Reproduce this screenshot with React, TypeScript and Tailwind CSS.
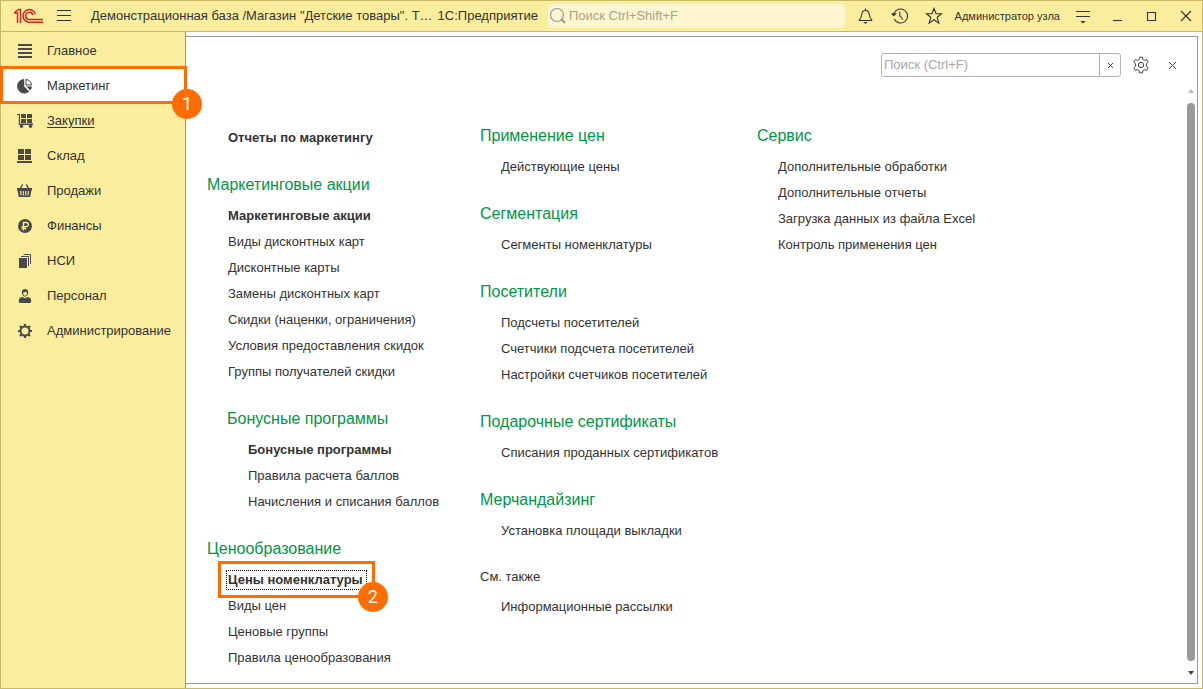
import React from "react";

type Item = { label: string; bold?: boolean; marked?: boolean };
type Group = { title?: string; nested?: boolean; plain?: boolean; items: Item[] };

const columns: Group[][] = [
  [
    { items: [{ label: "Отчеты по маркетингу", bold: true }] },
    {
      title: "Маркетинговые акции",
      items: [
        { label: "Маркетинговые акции", bold: true },
        { label: "Виды дисконтных карт" },
        { label: "Дисконтные карты" },
        { label: "Замены дисконтных карт" },
        { label: "Скидки (наценки, ограничения)" },
        { label: "Условия предоставления скидок" },
        { label: "Группы получателей скидки" },
      ],
    },
    {
      title: "Бонусные программы",
      nested: true,
      items: [
        { label: "Бонусные программы", bold: true },
        { label: "Правила расчета баллов" },
        { label: "Начисления и списания баллов" },
      ],
    },
    {
      title: "Ценообразование",
      items: [
        { label: "Цены номенклатуры", bold: true, marked: true },
        { label: "Виды цен" },
        { label: "Ценовые группы" },
        { label: "Правила ценообразования" },
      ],
    },
  ],
  [
    { title: "Применение цен", items: [{ label: "Действующие цены" }] },
    { title: "Сегментация", items: [{ label: "Сегменты номенклатуры" }] },
    {
      title: "Посетители",
      items: [
        { label: "Подсчеты посетителей" },
        { label: "Счетчики подсчета посетителей" },
        { label: "Настройки счетчиков посетителей" },
      ],
    },
    { title: "Подарочные сертификаты", items: [{ label: "Списания проданных сертификатов" }] },
    { title: "Мерчандайзинг", items: [{ label: "Установка площади выкладки" }] },
    { title: "См. также", plain: true, items: [{ label: "Информационные рассылки" }] },
  ],
  [
    {
      title: "Сервис",
      items: [
        { label: "Дополнительные обработки" },
        { label: "Дополнительные отчеты" },
        { label: "Загрузка данных из файла Excel" },
        { label: "Контроль применения цен" },
      ],
    },
  ],
];

// section icons, all on a 16x16 grid
const sections = [
  { label: "Главное", icon: <path d="M1 1h14v2H1zM1 5h14v2H1zM1 9h14v2H1zM1 13h14v2H1z" /> },
  {
    label: "Маркетинг",
    icon: (
      <>
        <path d="M7.200 1v7.500l5 5A7.200 7.200 0 1 1 7.200 1z" />
        <path d="M9 1.500a5.700 5.700 0 0 1 5.500 5.500H9z" fill="none" stroke="#4a4a4a" />
        <path d="M9.500 8.500h5.500a7 7 0 0 1-1.800 3.900z" />
      </>
    ),
  },
  {
    label: "Закупки",
    icon: (
      <>
        <path d="M0 1h3v9.500h13V12H1.800V2H0z" />
        <path d="M4 1h5v4H4zM10 1h5v4h-5zM4 6h5v4H4zM10 6h5v4h-5z" />
        <circle cx="4.500" cy="13.300" r="1.700" />
        <circle cx="13.500" cy="13.300" r="1.700" />
      </>
    ),
  },
  { label: "Склад", icon: <path d="M1 1h6v5H1zM8 1h6v5H8zM1 7h6v5H1zM8 7h6v5H8zM0 13h15v2H0z" /> },
  {
    label: "Продажи",
    icon: (
      <>
        <path d="M3 6l2.500-4H6M12 6L9.500 2H9" fill="none" stroke="#4a4a4a" strokeWidth="1.400" />
        <path
          fillRule="evenodd"
          d="M0 5h15v2.500h-.6L13.200 14H1.800L.6 7.500H0zM3 8l.6 4.500h1L4.200 8zM5.600 8l.3 4.500h1L6.800 8zM8.200 8l-.1 4.500h1L9.400 8zM10.800 8l-.4 4.500h1L12 8z"
        />
      </>
    ),
  },
  {
    label: "Финансы",
    icon: (
      <>
        <circle cx="8" cy="8" r="7" />
        <path d="M6.500 12.500V4.500h2.700a2.100 2.100 0 0 1 0 4.200H4.500M4.500 10.500h4.700" fill="none" stroke="#fbed9e" strokeWidth="1.300" />
      </>
    ),
  },
  {
    label: "НСИ",
    icon: (
      <>
        <path d="M2 5h8v10H2z" />
        <path d="M4 3.500h7.500V13M6.500 1.500h7V11" fill="none" stroke="#4a4a4a" />
      </>
    ),
  },
  {
    label: "Персонал",
    icon: (
      <>
        <path d="M8 1c2.200 0 3.200 1.500 3.200 3.500S9.700 8.700 8 8.700 4.800 6.500 4.800 4.500 5.800 1 8 1z" />
        <path d="M6 4.500c1.400 0 2.200-.2 2.700-.7.400.5.800.7 1.300.7C10 6.300 9.200 7.700 8 7.700S6 6.300 6 4.500z" fill="#fbed9e" />
        <path d="M5.500 9L8 10.300 10.500 9c2.300.5 3.700 1.200 3.700 3.700 0 1.800-.5 2.300-1.500 2.300H3.300c-1 0-1.500-.5-1.500-2.300 0-2.500 1.400-3.200 3.700-3.700z" />
      </>
    ),
  },
  {
    label: "Администрирование",
    icon: (
      <>
        <circle cx="8" cy="8" r="4.500" fill="none" stroke="#4a4a4a" strokeWidth="2" />
        <path
          d="M8 1v2.500M8 12.500V15M1 8h2.500M12.500 8H15M3 3l1.800 1.800M11.200 11.200L13 13M3 13l1.800-1.800M11.200 4.800L13 3"
          stroke="#4a4a4a"
          strokeWidth="2.200"
        />
      </>
    ),
  },
];

function Badge({ value, className }: { value: string; className: string }) {
  return (
    <span
      className={`absolute z-10 flex size-[30px] items-center justify-center rounded-full bg-[#ff6d00] font-[Roboto,sans-serif] text-lg font-normal text-white ${className}`}
    >
      {value}
    </span>
  );
}

function BarButton({ label, children }: { label: string; children: React.ReactNode }) {
  return (
    <button type="button" aria-label={label} className="flex h-[30px] w-[34px] shrink-0 items-center justify-center">
      <svg width="18" height="18" viewBox="0 0 18 18" fill="none" stroke="#333" strokeWidth="1.100">
        {children}
      </svg>
    </button>
  );
}

function TitleBar() {
  return (
    <header className="flex h-[31px] shrink-0 items-center border-b border-[#c9b866] bg-[#fbed9e]">
      <svg className="ml-[13px] shrink-0" width="30" height="16" viewBox="0 0 30 16" fill="none" stroke="#d9201f">
        <path d="M0 5h3.500v10M1 4l3.500-2.500h2V15" strokeWidth="1.500" />
        <path d="M21.300 6A6.300 6.300 0 1 0 15.500 14.200H29" strokeWidth="1.500" />
        <path d="M18.800 7A3.600 3.600 0 1 0 15.500 11.500H29" strokeWidth="1.500" />
      </svg>
      <button type="button" aria-label="Меню" className="ml-[11px] flex size-[18px] shrink-0 items-center justify-center">
        <svg width="14" height="12" viewBox="0 0 14 12" stroke="#333">
          <path d="M0 .5h14M0 5.500h14M0 10.500h14" />
        </svg>
      </button>
      <span className="ml-[18px] whitespace-nowrap">Демонстрационная база /Магазин "Детские товары". Т…</span>
      <span className="ml-[5px] whitespace-nowrap">1С:Предприятие</span>
      <label className="ml-[10px] flex h-6 min-w-0 flex-1 items-center rounded-sm bg-[#fdf6d0]">
        <svg className="ml-px shrink-0" width="18" height="18" viewBox="0 0 18 18" fill="none" stroke="#999">
          <circle cx="8" cy="8" r="6.500" strokeWidth="1.200" />
          <path d="M12 12l4 4" strokeWidth="2" />
        </svg>
        <input
          aria-label="Поиск"
          placeholder="Поиск Ctrl+Shift+F"
          className="ml-[2px] w-full min-w-0 bg-transparent outline-none placeholder:text-[#aaa38a]"
        />
      </label>
      <div className="ml-1 flex">
        <BarButton label="Уведомления">
          <path d="M1.800 13.500h13.400M2 13.300c2.300-1.800 2.400-3.300 2.700-5.800C5 5 6.500 3.500 8.500 3.500S12 5 12.300 7.500c.3 2.500.4 4 2.700 5.800M8.500 1.500v2" />
          <path d="M6.500 15h4l-2 2z" fill="#333" stroke="none" />
        </BarButton>
        <BarButton label="История">
          <path d="M3 6.500A7 7 0 1 1 3.200 12M8.800 4.500V9l3.200 3.500" />
          <path d="M0 6.300h5.800L2.700 9.500z" fill="#333" stroke="none" />
        </BarButton>
        <BarButton label="Избранное">
          <path d="M9 1.500l2 5.300h5.500l-4.300 3.500 1.700 5.900L9 12.700 4.100 16.200l1.700-5.900L1.500 6.800H7z" />
        </BarButton>
      </div>
      <span className="ml-1 mr-[6px] whitespace-nowrap text-[11px]">Администратор узла</span>
      <BarButton label="Настройка">
        <path d="M2 4.500h14M2 9.500h14" />
        <path d="M6.500 14h5L9 16.500z" fill="#333" stroke="none" />
      </BarButton>
      <BarButton label="Свернуть">
        <path d="M5 13.500h9" />
      </BarButton>
      <BarButton label="Развернуть">
        <path d="M5.500 5.500h8v8h-8z" />
      </BarButton>
      <BarButton label="Закрыть">
        <path d="M5 4l10 10M15 4L5 14" />
      </BarButton>
    </header>
  );
}

function Sidebar() {
  return (
    <nav className="w-[185px] shrink-0 border-r border-[#999] bg-[#fbed9e] pt-px">
      {sections.map((s) => {
        const active = s.label === "Маркетинг";
        return (
          <a
            key={s.label}
            href="#"
            className={`relative flex h-[35px] items-center pl-4 ${active ? "bg-white" : ""} ${s.label === "Закупки" ? "underline underline-offset-2" : ""}`}
          >
            <svg className="shrink-0" width="16" height="16" viewBox="0 0 16 16" fill="#4a4a4a">
              {s.icon}
            </svg>
            <span className="ml-[14px]">{s.label}</span>
            {active && (
              <>
                <span className="absolute -inset-x-px -top-[2px] -bottom-px -right-[2px] border-3 border-[#ff6d00]" />
                <Badge value="1" className="-right-[17px] -bottom-4" />
              </>
            )}
          </a>
        );
      })}
    </nav>
  );
}

function GroupBlock({ group }: { group: Group }) {
  return (
    <section className={group.nested ? "pl-5" : ""}>
      {group.title && group.plain && <h2 className="flex h-[34px] items-center">{group.title}</h2>}
      {group.title && !group.plain && (
        <h2 className="flex h-9 items-center whitespace-nowrap text-base text-[#009646]">{group.title}</h2>
      )}
      <ul className="pl-[21px]">
        {group.items.map((item) => (
          <li key={item.label} className="flex h-[26px] items-center whitespace-nowrap">
            <a href="#" className={`relative ${item.bold ? "font-bold" : ""}`}>
              {item.label}
              {item.marked && (
                <>
                  <span className="absolute -top-px -right-1 -bottom-px -left-[2px] border border-dotted border-black" />
                  <span className="absolute -top-[10px] -right-3 -bottom-[9px] -left-[10px] border-3 border-[#ff6d00]" />
                  <Badge value="2" className="-right-[25px] -bottom-[23px]" />
                </>
              )}
            </a>
          </li>
        ))}
      </ul>
    </section>
  );
}

function Panel() {
  return (
    <main className="mt-1 mr-1 mb-1 -ml-px flex min-w-0 flex-1 flex-col border border-[#999] bg-white">
      <div className="flex items-center justify-end pt-4 pr-[13px]">
        <div className="flex h-6 w-60 rounded-[3px] border border-[#b3b3b3]">
          <input
            aria-label="Поиск по разделу"
            placeholder="Поиск (Ctrl+F)"
            className="min-w-0 flex-1 px-[2px] outline-none placeholder:text-[#a6a6a6]"
          />
          <button type="button" aria-label="Очистить" className="flex w-[21px] items-center justify-center border-l border-[#b3b3b3]">
            <svg width="7" height="7" viewBox="0 0 7 7" stroke="#444">
              <path d="M1 1l5 5M6 1L1 6" />
            </svg>
          </button>
        </div>
        <button type="button" aria-label="Настройки" className="ml-2 flex size-6 items-center justify-center">
          <svg width="18" height="18" viewBox="0 0 18 18" fill="none" stroke="#444" strokeLinejoin="round">
            <path d="M7.500 1.200h3l.4 2.300 1.500.9 2.200-.8 1.600 2.600-1.800 1.500v2.600l1.800 1.500-1.600 2.600-2.200-.8-1.500.9-.4 2.300h-3l-.4-2.300-1.500-.9-2.200.8-1.600-2.600 1.800-1.500V7.700L1.800 6.200l1.600-2.600 2.200.8 1.500-.9z" />
            <circle cx="9" cy="9" r="2.700" />
          </svg>
        </button>
        <button type="button" aria-label="Закрыть раздел" className="ml-[7px] flex size-6 items-center justify-center">
          <svg width="9" height="9" viewBox="0 0 9 9" stroke="#444">
            <path d="M1 1l7 7M8 1L1 8" />
          </svg>
        </button>
      </div>
      <div className="flex flex-1 pt-2">
        <div className="grid flex-1 grid-cols-[273px_277px_1fr] pt-[33px] pb-3 pl-[21px]">
          {columns.map((groups, i) => (
            <div key={i} className={`flex flex-col gap-4 ${i === 0 ? "pt-[7px]" : ""}`}>
              {groups.map((g, j) => (
                <GroupBlock key={j} group={g} />
              ))}
            </div>
          ))}
        </div>
        <div className="mr-[2px] flex w-2 flex-col items-center pt-1 pb-2">
          <svg width="6" height="4" viewBox="0 0 6 4" fill="#bbb">
            <path d="M0 4l3-4 3 4z" />
          </svg>
          <div className="my-[10px] w-2 flex-1 rounded-full bg-[#999]" />
          <svg width="6" height="4" viewBox="0 0 6 4" fill="#444">
            <path d="M0 0l3 4 3-4z" />
          </svg>
        </div>
      </div>
    </main>
  );
}

export default function App() {
  return (
    <div className="flex min-h-screen flex-col border border-[#c9b866] bg-white font-['Liberation_Sans',Arial,sans-serif] text-[13px] leading-[18px] text-[#333]">
      <TitleBar />
      <div className="flex flex-1">
        <Sidebar />
        <Panel />
      </div>
    </div>
  );
}
